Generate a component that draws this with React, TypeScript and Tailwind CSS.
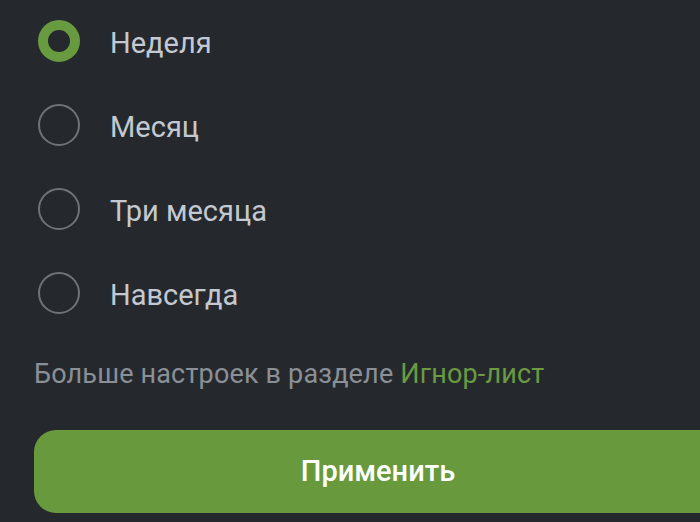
import React from "react";

const options = ["Неделя", "Месяц", "Три месяца", "Навсегда"];

export default function App() {
  const selected = 0;
  return (
    <div
      className="w-[700px] h-[522px] overflow-hidden bg-[#25292e]"
      style={{ fontFamily: "Roboto, 'Noto Sans', sans-serif" }}
    >
      <div className="w-[756px]">
        <div className="-mt-px flex flex-col">
          {options.map((o, i) => (
            <div key={o} className="h-[84px] flex items-center pl-[38px] gap-[30px]">
              {i === selected ? (
                <div className="w-[42px] h-[42px] rounded-full border-[10px] border-[#689a3f] bg-[#25292e] shrink-0" />
              ) : (
                <div className="w-[42px] h-[42px] rounded-full border-2 border-[#6f7378] shrink-0" />
              )}
              <span className="mt-[4px] text-[29px] leading-[32px] text-[#c4c9d1]">{o}</span>
            </div>
          ))}
        </div>
        <p className="mt-[21px] pl-[34px] text-[27px] leading-[36px] tracking-[0.17px] text-[#8b9097]">
          Больше настроек в разделе <span className="text-[#6a9a42]">Игнор-лист</span>
        </p>
        <button className="mt-[38px] ml-[34px] w-[688px] h-[83px] rounded-[22px] bg-[#689a3d] text-white text-[29px] font-medium flex items-center justify-center">
          Применить
        </button>
      </div>
    </div>
  );
}
